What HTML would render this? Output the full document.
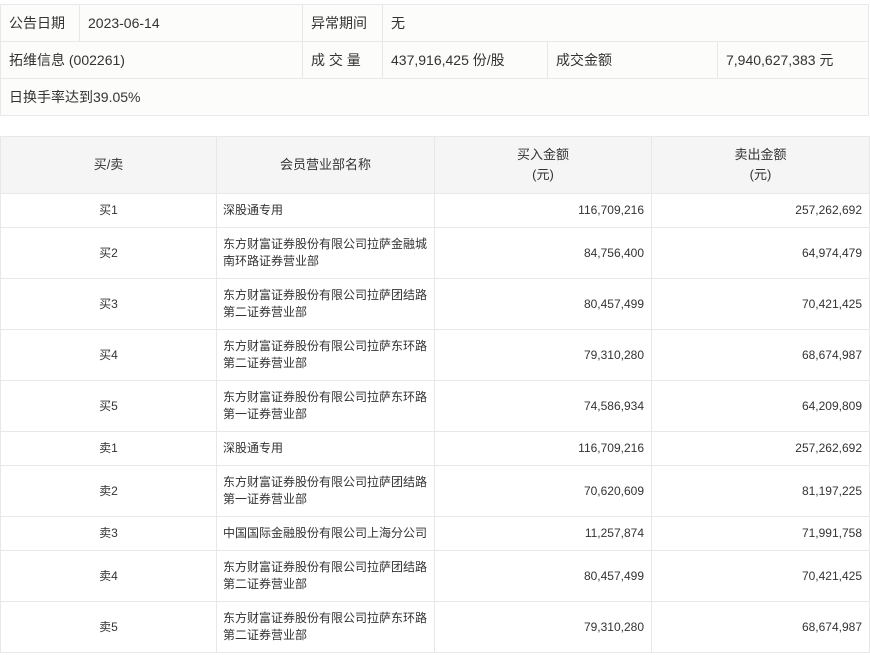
<!DOCTYPE html>
<html><head><meta charset="utf-8"><style>
body{margin:0;background:#fff;font-family:"Liberation Sans","Noto Sans CJK SC",sans-serif;color:#333;width:870px;height:655px;overflow:hidden;position:relative}
table{border-collapse:collapse;position:absolute;left:0;table-layout:fixed}
td,th{border:1px solid #e8e8e8;padding:0 7px;font-weight:normal}
#t1{top:4px;width:868px;background:#fcfcfa;font-size:14px}
#t1 td{height:36px;padding:0 8px}
#t2{top:136px;width:869px;font-size:12px}
#t2 th{background:#f5f5f5;height:56px;font-size:13px;text-align:center;line-height:20px}
#t2 td{line-height:17px}
#t2 td.n{padding:0 2px 0 6px}
.c{text-align:center}.r{text-align:right}
.h1{height:33px}.h2{height:50px}
</style></head><body>
<table id="t1">
<colgroup><col style="width:79px"><col style="width:223px"><col style="width:80px"><col style="width:165px"><col style="width:170px"><col style="width:151px"></colgroup>
<tr><td>公告日期</td><td>2023-06-14</td><td>异常期间</td><td colspan="3">无</td></tr>
<tr><td colspan="2">拓维信息 (002261)</td><td>成 交 量</td><td>437,916,425 份/股</td><td>成交金额</td><td>7,940,627,383 元</td></tr>
<tr><td colspan="6">日换手率达到39.05%</td></tr>
</table>
<table id="t2">
<colgroup><col style="width:216px"><col style="width:218px"><col style="width:217px"><col style="width:218px"></colgroup>
<tr><th>买/卖</th><th>会员营业部名称</th><th>买入金额<br>(元)</th><th>卖出金额<br>(元)</th></tr>
<tr><td class="c h1">买1</td><td class="n">深股通专用</td><td class="r">116,709,216</td><td class="r">257,262,692</td></tr>
<tr><td class="c h2">买2</td><td class="n">东方财富证券股份有限公司拉萨金融城<br>南环路证券营业部</td><td class="r">84,756,400</td><td class="r">64,974,479</td></tr>
<tr><td class="c h2">买3</td><td class="n">东方财富证券股份有限公司拉萨团结路<br>第二证券营业部</td><td class="r">80,457,499</td><td class="r">70,421,425</td></tr>
<tr><td class="c h2">买4</td><td class="n">东方财富证券股份有限公司拉萨东环路<br>第二证券营业部</td><td class="r">79,310,280</td><td class="r">68,674,987</td></tr>
<tr><td class="c h2">买5</td><td class="n">东方财富证券股份有限公司拉萨东环路<br>第一证券营业部</td><td class="r">74,586,934</td><td class="r">64,209,809</td></tr>
<tr><td class="c h1">卖1</td><td class="n">深股通专用</td><td class="r">116,709,216</td><td class="r">257,262,692</td></tr>
<tr><td class="c h2">卖2</td><td class="n">东方财富证券股份有限公司拉萨团结路<br>第一证券营业部</td><td class="r">70,620,609</td><td class="r">81,197,225</td></tr>
<tr><td class="c h1">卖3</td><td class="n" style="white-space:nowrap">中国国际金融股份有限公司上海分公司</td><td class="r">11,257,874</td><td class="r">71,991,758</td></tr>
<tr><td class="c h2">卖4</td><td class="n">东方财富证券股份有限公司拉萨团结路<br>第二证券营业部</td><td class="r">80,457,499</td><td class="r">70,421,425</td></tr>
<tr><td class="c h2">卖5</td><td class="n">东方财富证券股份有限公司拉萨东环路<br>第二证券营业部</td><td class="r">79,310,280</td><td class="r">68,674,987</td></tr>
</table>
</body></html>
